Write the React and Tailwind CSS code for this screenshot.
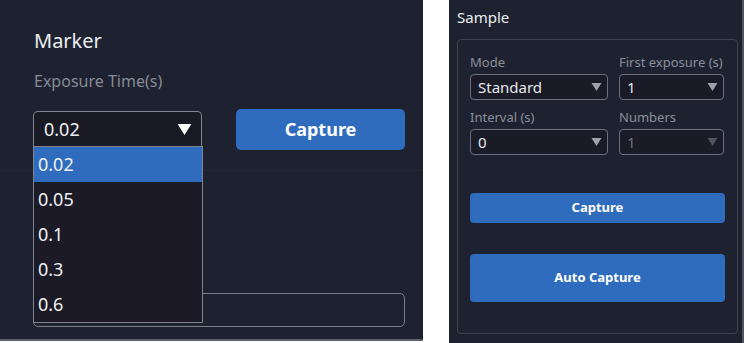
import React from 'react';

// ── Shared bits ─────────────────────────────────────────────────────────────

const FONT = { fontFamily: '"Noto Sans", "Open Sans", sans-serif' };

const Caret = ({ className = '' }) => (
  <svg viewBox="0 0 10 8" className={className}>
    <path d="M0 0h10L5 8z" fill="currentColor" />
  </svg>
);

const SmallSelect = ({ value, disabled }) => (
  <div
    className={`
      h-[26px] flex items-center justify-between
      border border-[#6b7080] rounded-[4px]
      bg-[#1a1b26] pl-[7px] pr-[5px]
      text-[15px] leading-none
      ${disabled ? 'text-[#6d717c]' : 'text-[#e6e8ec]'}
    `}
  >
    <span>{value}</span>
    <Caret className={`w-[11px] h-[8px] ${disabled ? 'text-[#4f535d]' : 'text-[#9da1aa]'}`} />
  </div>
);

const Field = ({ label, value, disabled }) => (
  <div className="flex flex-col">
    <span className="text-[13px] leading-[17px] text-[#8a8e98] mb-[3px]">{label}</span>
    <SmallSelect value={value} disabled={disabled} />
  </div>
);

// ─────────────────────────────────────────────────────────────────────────────

export default function App() {
  const options = ['0.02', '0.05', '0.1', '0.3', '0.6'];

  return (
    <div className="w-[744px] h-[343px] bg-white flex overflow-hidden" style={FONT}>

      {/* ── Marker panel ─────────────────────────────────────────────────── */}
      <div className="w-[423px] h-[341px] bg-[#1e2230] border-b-2 border-[#5c606b] relative">
        <div className="pl-[34px] pt-[28px] pr-[18px]">
          <h2 className="text-[20px] leading-[26px] text-[#eceef2]">Marker</h2>
          <p className="mt-[16px] text-[16px] leading-[22px] text-[#868a94]">Exposure Time(s)</p>

          <div className="mt-[19px] flex gap-[34px] items-start">
            <div className="
              w-[169px] h-[35px] -ml-[1px]
              flex items-center justify-between
              border border-[#80848e] rounded-t-[5px] border-b-0
              bg-[#1a1a24] pl-[10px] pr-[9px]
              text-[18px] text-[#eef0f3]
            ">
              <span>0.02</span>
              <Caret className="w-[15px] h-[11px] text-white" />
            </div>
            <button className="
              -mt-[2px] w-[169px] h-[41px] rounded-[5px]
              bg-[#2f6cbd] text-white text-[18px] font-bold
            ">
              Capture
            </button>
          </div>
        </div>

        {/* divider */}
        <div className="mt-[20px] h-px bg-[#262a36]" />

        {/* input behind the dropdown */}
        <div className="mt-[122px] ml-[33px] w-[372px] h-[34px] border border-[#7a7e88] rounded-[5px]" />

        {/* open dropdown list */}
        <ul className="
          absolute left-[33px] top-[146px] w-[170px] h-[177px]
          bg-[#1b1a26] border border-[#80848e]
          text-[18px] text-[#eef0f3]
        ">
          {options.map((o, i) => (
            <li
              key={o}
              className={`h-[35px] flex items-center pl-[4px] ${i === 0 ? 'bg-[#2f6cbd]' : ''}`}
            >
              {o}
            </li>
          ))}
        </ul>
      </div>

      {/* ── Sample panel ─────────────────────────────────────────────────── */}
      <div className="ml-[26px] w-[295px] h-[343px] bg-[#1e2230] border-r-2 border-[#50545e] pl-[8px] pr-[4px]">
        <h3 className="pt-[6px] text-[15px] leading-[22px] text-[#eceef2]">Sample</h3>

        <div className="mt-[11px] h-[295px] border border-[#3d414c] rounded-[4px] px-[12px] pt-[14px]">
          <div className="grid grid-cols-[138px_105px] gap-x-[11px] gap-y-[9px]">
            <Field label="Mode" value="Standard" />
            <Field label="First exposure (s)" value="1" />
            <Field label="Interval (s)" value="0" />
            <Field label="Numbers" value="1" disabled />
          </div>

          <button className="
            mt-[38px] w-full h-[30px] rounded-[4px]
            bg-[#2f6cbd] text-white text-[13px] font-bold
          ">
            Capture
          </button>
          <button className="
            mt-[31px] w-full h-[48px] rounded-[4px]
            bg-[#2f6cbd] text-white text-[13px] font-bold
          ">
            Auto Capture
          </button>
        </div>
      </div>
    </div>
  );
}
